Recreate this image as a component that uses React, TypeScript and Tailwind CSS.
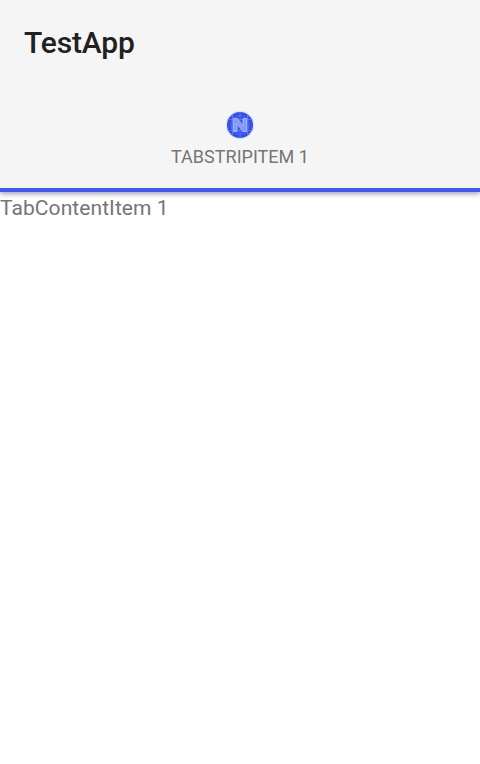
export default function App() {
  return (
    <div className="h-[764px] w-[480px] overflow-hidden bg-white font-[Roboto,sans-serif]">
      <header className="flex h-48 flex-col border-b-4 border-[#3d5afe] bg-[#f5f5f5] shadow-[0_2px_5px_rgba(0,0,0,0.36)]">
        <h1 className="pt-[25px] pl-6 text-[30px] leading-[35px] font-medium tracking-[-0.15px] text-[#212121]">TestApp</h1>
        <div className="flex flex-col items-center pt-[50px]">
          <svg className="size-[30px]" viewBox="0 0 30 30">
            <circle cx="15" cy="15" r="14.2" fill="#dedfe8" />
            <circle cx="15" cy="15" r="13" fill="#3450ee" />
            <path
              d="M2.5 9.5H27.5M2.5 20.5H27.5M7.5 4.5V25.5M22.5 4.5V25.5M15 2V28M6 6L24 24M24 6L6 24"
              fill="none"
              stroke="#6d82f5"
              strokeWidth="0.7"
            />
            <circle cx="15" cy="15" r="9" fill="none" stroke="#6279f4" strokeWidth="0.6" />
            <path
              d="M8.5 21.5V8.5H12.5L18 16.5V8.5H21.5V21.5H17.8L12 13.5V21.5Z"
              fill="#8498f8"
              stroke="#aebcfc"
              strokeWidth="0.9"
            />
          </svg>
          <span className="mt-[6px] text-[18px] leading-[21px] tracking-[0.02px] text-[#757575]">TABSTRIPITEM 1</span>
        </div>
      </header>
      <main className="pt-1 text-[21px] leading-[25px] tracking-[0.08px] text-[#757575]">TabContentItem 1</main>
    </div>
  );
}
